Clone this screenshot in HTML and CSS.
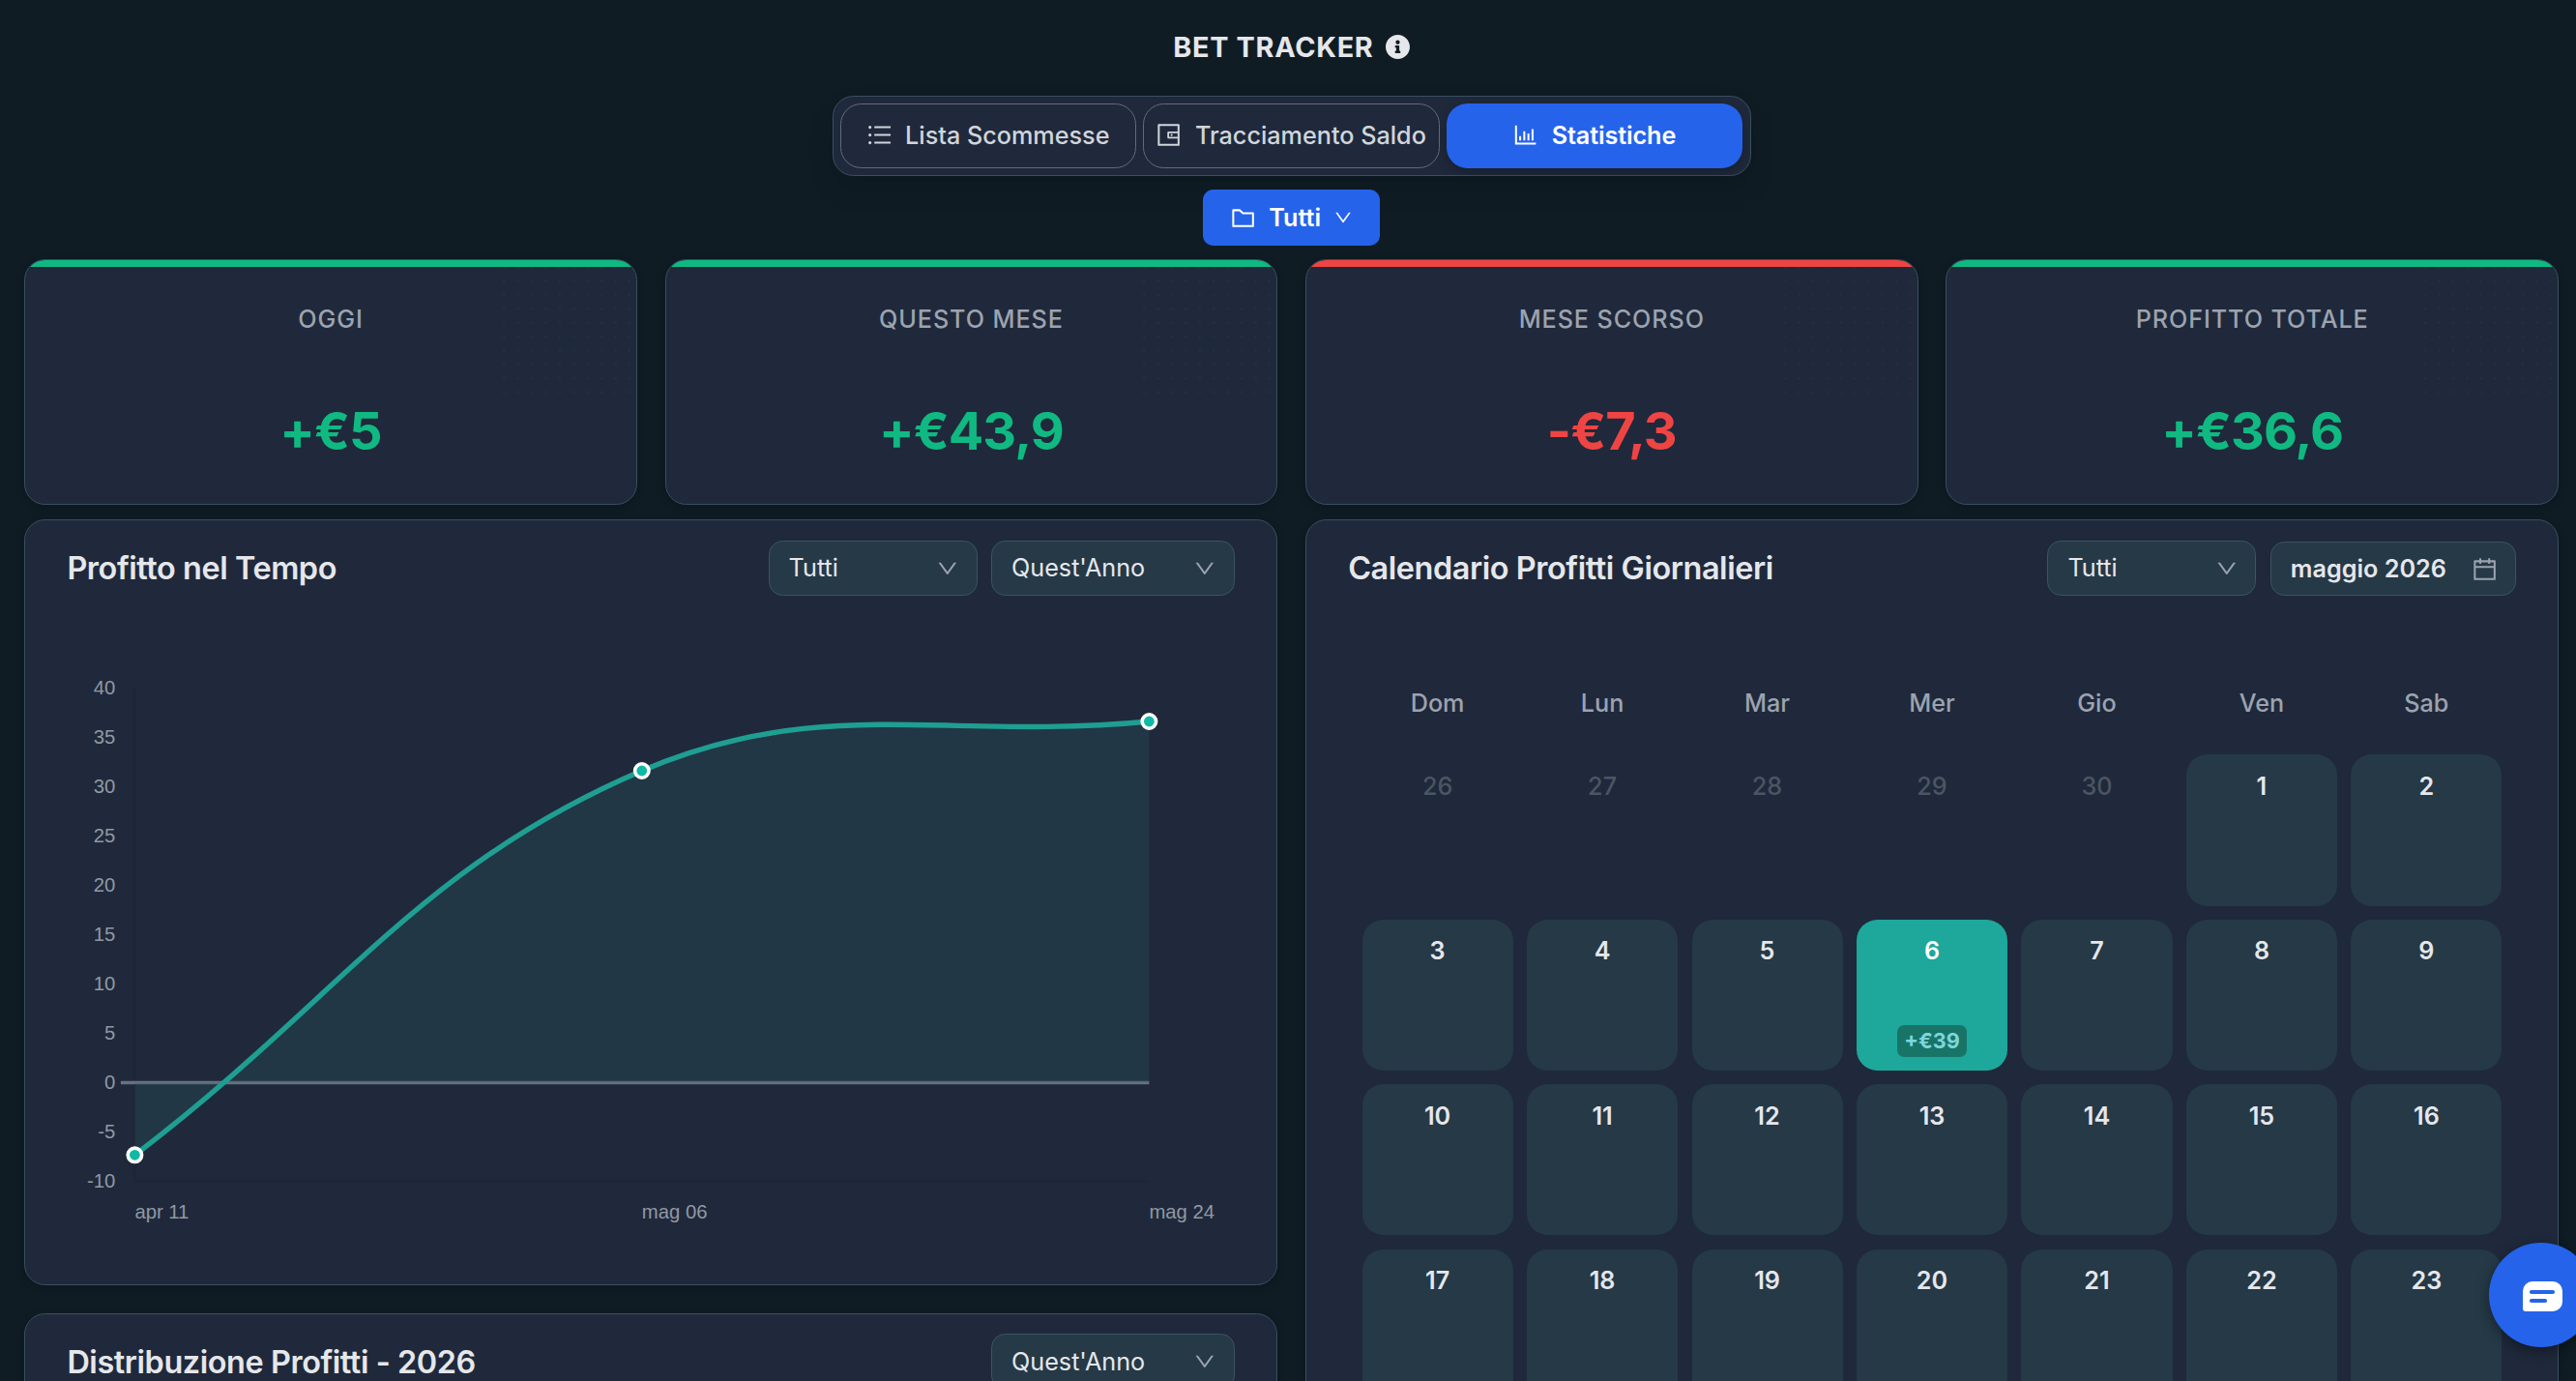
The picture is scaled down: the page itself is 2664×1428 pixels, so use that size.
FILE: index.html
```html
<!DOCTYPE html>
<html lang="it">
<head>
    <meta charset="UTF-8">
    <meta name="viewport" content="width=device-width, initial-scale=1.0">
    <title>Bet Tracker - Statistiche</title>
    <link rel="stylesheet" href="styles.css">
</head>
<body>
    <svg class="sprite">
        <symbol id="i-down" viewBox="64 64 896 896"><path d="M884 256h-75c-5.1 0-9.9 2.5-12.9 6.6L512 654.2 227.9 262.6c-3-4.1-7.8-6.6-12.9-6.6h-75c-6.5 0-10.3 7.4-6.5 12.7l352.6 486.1c12.8 17.6 39 17.6 51.7 0l352.6-486.1c3.9-5.3.1-12.7-6.4-12.7z"/></symbol>
        <symbol id="i-list" viewBox="64 64 896 896"><path d="M912 192H328c-4.4 0-8 3.6-8 8v56c0 4.4 3.6 8 8 8h584c4.4 0 8-3.6 8-8v-56c0-4.4-3.6-8-8-8zm0 284H328c-4.4 0-8 3.6-8 8v56c0 4.4 3.6 8 8 8h584c4.4 0 8-3.6 8-8v-56c0-4.4-3.6-8-8-8zm0 284H328c-4.4 0-8 3.6-8 8v56c0 4.4 3.6 8 8 8h584c4.4 0 8-3.6 8-8v-56c0-4.4-3.6-8-8-8zM104 228a56 56 0 10112 0 56 56 0 10-112 0zm0 284a56 56 0 10112 0 56 56 0 10-112 0zm0 284a56 56 0 10112 0 56 56 0 10-112 0z"/></symbol>
        <symbol id="i-wallet" viewBox="64 64 896 896"><path d="M880 112H144c-17.7 0-32 14.3-32 32v736c0 17.7 14.3 32 32 32h736c17.7 0 32-14.3 32-32V144c0-17.7-14.3-32-32-32zm-40 464H528V448h312v128zm0 264H184V184h656v200H496c-17.7 0-32 14.3-32 32v192c0 17.7 14.3 32 32 32h344v200zM580 512a40 40 0 1080 0 40 40 0 10-80 0z"/></symbol>
        <symbol id="i-chart" viewBox="64 64 896 896"><path d="M888 792H200V168c0-4.4-3.6-8-8-8h-56c-4.4 0-8 3.6-8 8v688c0 4.4 3.6 8 8 8h752c4.4 0 8-3.6 8-8v-56c0-4.4-3.6-8-8-8zm-600-80h56c4.4 0 8-3.6 8-8V560c0-4.4-3.6-8-8-8h-56c-4.4 0-8 3.6-8 8v144c0 4.4 3.6 8 8 8zm152 0h56c4.4 0 8-3.6 8-8V384c0-4.4-3.6-8-8-8h-56c-4.4 0-8 3.6-8 8v320c0 4.4 3.6 8 8 8zm152 0h56c4.4 0 8-3.6 8-8V462c0-4.4-3.6-8-8-8h-56c-4.4 0-8 3.6-8 8v242c0 4.4 3.6 8 8 8zm152 0h56c4.4 0 8-3.6 8-8V304c0-4.4-3.6-8-8-8h-56c-4.4 0-8 3.6-8 8v400c0 4.4 3.6 8 8 8z"/></symbol>
        <symbol id="i-folder" viewBox="64 64 896 896"><path d="M880 298.4H521L403.7 186.2a8.15 8.15 0 00-5.5-2.2H144c-17.7 0-32 14.3-32 32v592c0 17.7 14.3 32 32 32h736c17.7 0 32-14.3 32-32V330.4c0-17.7-14.3-32-32-32zM840 768H184V256h188.5l119.6 114.4H840V768z"/></symbol>
        <symbol id="i-calendar" viewBox="64 64 896 896"><path d="M880 184H712v-64c0-4.4-3.6-8-8-8h-56c-4.4 0-8 3.6-8 8v64H384v-64c0-4.4-3.6-8-8-8h-56c-4.4 0-8 3.6-8 8v64H144c-17.7 0-32 14.3-32 32v664c0 17.7 14.3 32 32 32h736c17.7 0 32-14.3 32-32V216c0-17.7-14.3-32-32-32zm-40 656H184V460h656v380zM184 392V256h128v48c0 4.4 3.6 8 8 8h56c4.4 0 8-3.6 8-8v-48h256v48c0 4.4 3.6 8 8 8h56c4.4 0 8-3.6 8-8v-48h128v136H184z"/></symbol>
        <symbol id="i-info" viewBox="8 8 496 496"><path d="M256 8C119.043 8 8 119.083 8 256c0 136.997 111.043 248 248 248s248-111.003 248-248C504 119.083 392.957 8 256 8zm0 110c23.196 0 42 18.804 42 42s-18.804 42-42 42-42-18.804-42-42 18.804-42 42-42zm56 254c0 6.627-5.373 12-12 12h-88c-6.627 0-12-5.373-12-12v-24c0-6.627 5.373-12 12-12h12v-64h-12c-6.627 0-12-5.373-12-12v-24c0-6.627 5.373-12 12-12h64c6.627 0 12 5.373 12 12v100h12c6.627 0 12 5.373 12 12v24z"/></symbol>
    </svg>

    <header class="header">
        <h1 class="title">BET TRACKER <svg class="info"><use href="#i-info"/></svg></h1>
        <nav class="tabs">
            <button class="tab"><svg class="icon"><use href="#i-list"/></svg>Lista Scommesse</button>
            <button class="tab"><svg class="icon"><use href="#i-wallet"/></svg>Tracciamento Saldo</button>
            <button class="tab active"><svg class="icon"><use href="#i-chart"/></svg>Statistiche</button>
        </nav>
        <button class="folder-btn"><svg class="icon"><use href="#i-folder"/></svg>Tutti<svg class="icon-sm"><use href="#i-down"/></svg></button>
    </header>

    <main class="main">
        <section class="stats-grid">
            <div class="stat-card positive">
                <div class="stat-label">OGGI</div>
                <div class="stat-value">+€5</div>
            </div>
            <div class="stat-card positive">
                <div class="stat-label">QUESTO MESE</div>
                <div class="stat-value">+€43,9</div>
            </div>
            <div class="stat-card negative">
                <div class="stat-label">MESE SCORSO</div>
                <div class="stat-value">-€7,3</div>
            </div>
            <div class="stat-card positive">
                <div class="stat-label">PROFITTO TOTALE</div>
                <div class="stat-value">+€36,6</div>
            </div>
        </section>

        <section class="panels">
            <div class="column">
                <div class="card chart-card">
                    <div class="card-header">
                        <h2>Profitto nel Tempo</h2>
                        <div class="filters">
                            <div class="select">Tutti<svg class="arrow"><use href="#i-down"/></svg></div>
                            <div class="select wide">Quest'Anno<svg class="arrow"><use href="#i-down"/></svg></div>
                        </div>
                    </div>
                    <svg class="chart" viewBox="68.6 680 1207 600">
                        <path class="axis" d="M139 711V1222M139 1221.5H1188"/>
                        <path class="zero" d="M124.5 1119.5H1188"/>
                        <path class="area" d="M139 1194.3C348.8 1035 430.4 896.5 663.4 797C850 717.3 978.2 766.4 1188 746V1119.5H139Z"/>
                        <path class="line" d="M139 1194.3C348.8 1035 430.4 896.5 663.4 797C850 717.3 978.2 766.4 1188 746"/>
                        <g class="points">
                            <circle cx="139" cy="1194.3" r="7.2"/>
                            <circle cx="663.4" cy="797" r="7.2"/>
                            <circle cx="1188" cy="746" r="7.2"/>
                        </g>
                        <g class="y-labels">
                            <text x="119" y="718">40</text>
                            <text x="119" y="769">35</text>
                            <text x="119" y="820">30</text>
                            <text x="119" y="870.5">25</text>
                            <text x="119" y="921.5">20</text>
                            <text x="119" y="973">15</text>
                            <text x="119" y="1024">10</text>
                            <text x="119" y="1075">5</text>
                            <text x="119" y="1125.5">0</text>
                            <text x="119" y="1176.5">-5</text>
                            <text x="119" y="1227.5">-10</text>
                        </g>
                        <g class="x-labels">
                            <text x="139" y="1260">apr 11</text>
                            <text x="663.4" y="1260">mag 06</text>
                            <text x="1188" y="1260">mag 24</text>
                        </g>
                    </svg>
                </div>

                <div class="card">
                    <div class="card-header">
                        <h2>Distribuzione Profitti - 2026</h2>
                        <div class="filters">
                            <div class="select wide">Quest'Anno<svg class="arrow"><use href="#i-down"/></svg></div>
                        </div>
                    </div>
                </div>
            </div>

            <div class="card calendar-card">
                <div class="card-header">
                    <h2>Calendario Profitti Giornalieri</h2>
                    <div class="filters">
                        <div class="select">Tutti<svg class="arrow"><use href="#i-down"/></svg></div>
                        <div class="select month">maggio 2026<svg class="cal-icon"><use href="#i-calendar"/></svg></div>
                    </div>
                </div>
                <div class="weekdays">
                    <span>Dom</span><span>Lun</span><span>Mar</span><span>Mer</span><span>Gio</span><span>Ven</span><span>Sab</span>
                </div>
                <div class="days">
                    <div class="day other">26</div>
                    <div class="day other">27</div>
                    <div class="day other">28</div>
                    <div class="day other">29</div>
                    <div class="day other">30</div>
                    <div class="day">1</div>
                    <div class="day">2</div>
                    <div class="day">3</div>
                    <div class="day">4</div>
                    <div class="day">5</div>
                    <div class="day profit">6<span class="amount">+€39</span></div>
                    <div class="day">7</div>
                    <div class="day">8</div>
                    <div class="day">9</div>
                    <div class="day">10</div>
                    <div class="day">11</div>
                    <div class="day">12</div>
                    <div class="day">13</div>
                    <div class="day">14</div>
                    <div class="day">15</div>
                    <div class="day">16</div>
                    <div class="day">17</div>
                    <div class="day">18</div>
                    <div class="day">19</div>
                    <div class="day">20</div>
                    <div class="day">21</div>
                    <div class="day">22</div>
                    <div class="day">23</div>
                </div>
            </div>
        </section>
    </main>

    <button class="chat-btn">
        <svg width="41" height="31" viewBox="0 0 41 31">
            <path fill="#fff" d="M10 0H31A10 10 0 0 1 41 10V21A10 10 0 0 1 31 31H3A3 3 0 0 1 0 28V10A10 10 0 0 1 10 0Z"/>
            <path stroke="#2563eb" stroke-width="4.2" stroke-linecap="round" d="M9 11H31M9 20H23"/>
        </svg>
    </button>
</body>
</html>
```

FILE: styles.css
```css
* { margin: 0; padding: 0; box-sizing: border-box; }
body { height: 1428px; overflow: hidden; font-family: Inter, sans-serif; background: #0f1c24; color: #e5e7eb; }
button { font-family: inherit; border: none; }
svg { fill: currentColor; flex-shrink: 0; }
.sprite { display: none; }

.header { display: flex; flex-direction: column; align-items: center; padding: 30px 0 0 7.2px; }
.title { display: flex; align-items: center; gap: 12.5px; height: 36px; margin-bottom: 33px; font-size: 28.8px; font-weight: 700; letter-spacing: 0.72px; }
.info { width: 25px; height: 25px; }
.tabs { display: flex; gap: 7.2px; padding: 7.2px; border: 1px solid #3a4f61; border-radius: 21.6px; background: #1f293b; box-shadow: 0 14px 28px rgba(0,0,0,0.1); }
.tab { display: flex; align-items: center; justify-content: center; gap: 14.4px; width: 306.4px; height: 67px; padding-bottom: 1.5px; border: 1px solid #616c7b; border-radius: 21.6px; background: none; color: #d1d5db; font-size: 25.2px; font-weight: 500; white-space: nowrap; }
.tab.active { border: none; background: #2563eb; color: #fff; font-weight: 600; letter-spacing: -0.1px; box-shadow: 0 4px 12px rgba(0,0,0,0.25); }
.icon { width: 25.2px; height: 25.2px; }
.icon-sm { width: 18px; height: 18px; }
.folder-btn { display: flex; align-items: center; justify-content: center; gap: 14.4px; width: 183px; height: 58px; margin-top: 14px; border-radius: 10.8px; background: #2563eb; color: #fff; font-size: 25.2px; font-weight: 600; }

.main { padding: 14px 18px 0 25.2px; }
.stats-grid { display: grid; grid-template-columns: repeat(4, 1fr); gap: 28.8px; }
.stat-card { position: relative; overflow: hidden; height: 254px; padding-top: 45px; border: 1px solid #3a4e60; border-radius: 21.6px; background: #1f293b; text-align: center; box-shadow: 0 2px 8px rgba(0,0,0,0.2); }
.stat-card::before { content: ""; position: absolute; top: 0; left: 0; right: 0; height: 7px; background: currentColor; }
.stat-card::after { content: ""; position: absolute; top: 0; right: 0; width: 144px; height: 144px; background: radial-gradient(circle, currentColor 1.8px, transparent 1.8px) 0 0 / 14.4px 14.4px; opacity: 0.05; }
.positive { color: #10b981; }
.negative { color: #ef4444; }
.stat-label { height: 32px; line-height: 32px; color: #9ca3af; font-size: 25.2px; font-weight: 500; letter-spacing: 0.9px; }
.stat-value { margin-top: 67px; line-height: 66px; font-size: 54px; font-weight: 700; letter-spacing: -0.9px; }

.panels { display: grid; grid-template-columns: 1fr 1fr; gap: 28.8px; margin-top: 15px; }
.column { display: flex; flex-direction: column; gap: 28.8px; }
.card { padding: 20.2px 43.2px; border: 1px solid #3a4e60; border-radius: 21.6px; background: #1f293b; box-shadow: 0 2px 8px rgba(0,0,0,0.2); }
.chart-card { height: 792px; }
.calendar-card { height: 1200px; }
.card-header { display: flex; justify-content: space-between; align-items: center; height: 57.6px; }
.card-header h2 { font-size: 32.4px; font-weight: 600; letter-spacing: -0.42px; white-space: nowrap; }
.filters { display: flex; align-items: flex-end; gap: 14.4px; }
.select { display: flex; justify-content: space-between; align-items: center; width: 216px; height: 57.6px; padding: 0 19px 0 20px; border: 1px solid #3d5363; border-radius: 14.4px; background: #253947; font-size: 25.2px; white-space: nowrap; }
.select.wide { width: 252px; }
.select.month { width: 254px; height: 56px; font-weight: 600; }
.arrow { width: 21.6px; height: 21.6px; color: #9ca3af; }
.cal-icon { width: 25.2px; height: 25.2px; color: #9ca3af; }

.chart { display: block; width: 1207px; height: 600px; margin-top: 64.2px; }
.axis { fill: none; stroke: #1c2636; stroke-width: 1.8; }
.zero { stroke: #6a7281; stroke-width: 3.6; }
.area { fill: #295b60; opacity: 0.3; }
.line { fill: none; stroke: #1f9e92; stroke-width: 5.4; }
.points { fill: #10b9a6; stroke: #fff; stroke-width: 3.6; }
.y-labels, .x-labels { fill: #9198a4; font-family: "Liberation Sans", Arial, sans-serif; font-size: 20.3px; }
.y-labels { text-anchor: end; }

.weekdays, .days { display: grid; grid-template-columns: repeat(7, 1fr); gap: 14.4px; margin: 0 14.4px; }
.weekdays { margin-top: 95px; color: #9ca3af; font-size: 25.2px; font-weight: 500; line-height: 32px; text-align: center; }
.days { margin-top: 37.3px; }
.day { display: flex; flex-direction: column; justify-content: space-between; align-items: center; aspect-ratio: 1; padding: 14.4px 0; border-radius: 21.6px; background: #253947; font-size: 25.2px; font-weight: 600; line-height: 36px; }
.day.other { background: none; color: #4b5563; font-weight: 500; }
.day.profit { background: #1da89b; color: #fff; }
.amount { padding: 0 7.2px; border-radius: 7.2px; background: #197468; color: #7dd6db; font-size: 21.6px; font-weight: 700; line-height: 33px; }

.chat-btn { position: fixed; top: 1285px; left: 2574px; display: flex; align-items: center; justify-content: center; width: 108px; height: 108px; padding: 3px 0 0 3px; border-radius: 50%; background: #2563eb; box-shadow: 0 4px 14px rgba(0,0,0,0.4); }
```
